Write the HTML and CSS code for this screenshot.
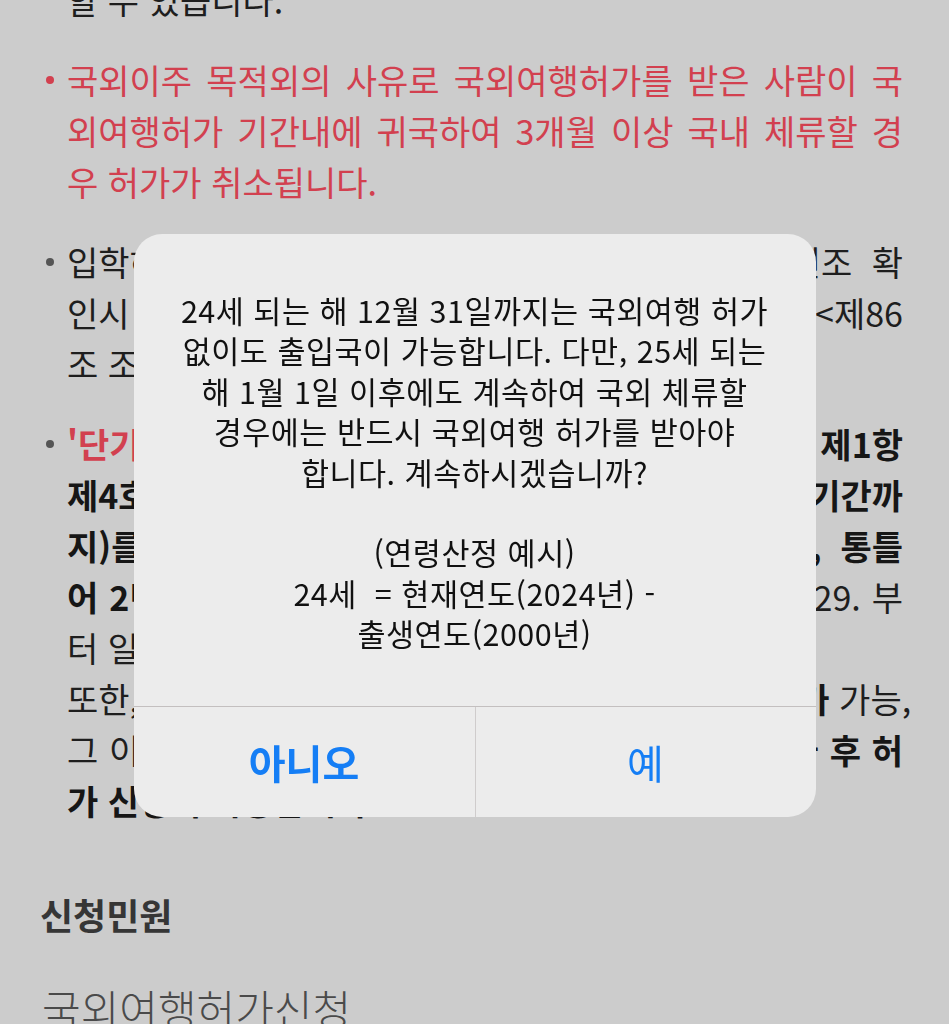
FILE: index.html
```html
<!DOCTYPE html>
<html lang="ko">
<head>
<meta charset="utf-8">
<title>국외여행허가</title>
<link rel="stylesheet" href="styles.css">
</head>
<body>
<main class="page">
  <div class="cont">
    <div class="ln last">할 수 있습니다.</div>
  </div>

  <div class="item">
    <span class="dot red-dot"></span>
    <div class="txt red">
      <div class="ln">국외이주 목적외의 사유로 국외여행허가를 받은 사람이 국</div>
      <div class="ln">외여행허가 기간내에 귀국하여 3개월 이상 국내 체류할 경</div>
      <div class="ln last">우 허가가 취소됩니다.</div>
    </div>
  </div>

  <div class="item">
    <span class="dot"></span>
    <div class="txt">
      <div class="ln">입학허가서 등 제출서류를 허위로 작성하거나 위변조 확</div>
      <div class="ln">인시 국외여행허가 취소 및 처벌될 수 있습니다.&lt;제86</div>
      <div class="ln last">조 조치 및 제94조 처벌&gt;</div>
    </div>
  </div>

  <div class="item">
    <span class="dot"></span>
    <div class="txt">
      <div class="ln"><b class="red">'단기 국외여행'</b><b> 허가기간은 병역법 시행령 제146조 제1항</b></div>
      <div class="ln"><b>제4호에 따라 허가기간(최초 허가일부터 최대 허가기간까</b></div>
      <div class="ln"><b>지)를 부여하며, 기간연장 시에도 최초 허가일부터, 통틀</b></div>
      <div class="ln"><b>어 2년 이내로 허가합니다</b>(예: 2024. 3. 1.~2026. 2. 29. 부</div>
      <div class="ln last">터 일정 기간 체류 가능)</div>
      <div class="ln">또한, 귀국 후 다시 출국하는 경우 <b>1회에 한하여 재허가</b> 가능,</div>
      <div class="ln">그 이후에는 병역의무를 먼저 이행하거나 <b>국내로 귀국 후 허</b></div>
      <div class="ln last"><b>가 신청이 가능합니다.</b></div>
    </div>
  </div>

  <h2 class="heading">신청민원</h2>
  <div class="service">국외여행허가신청</div>
</main>

<div class="overlay">
  <div class="dialog" role="alertdialog">
    <div class="msg">
      24세 되는 해 12월 31일까지는 국외여행 허가<br>
      없이도 출입국이 가능합니다. 다만, 25세 되는<br>
      해 1월 1일 이후에도 계속하여 국외 체류할<br>
      경우에는 반드시 국외여행 허가를 받아야<br>
      합니다. 계속하시겠습니까?<br>
      <br>
      (연령산정 예시)<br>
      24세&nbsp; = 현재연도(2024년) -<br>
      출생연도(2000년)
    </div>
    <div class="actions">
      <button class="btn btn-no" type="button">아니오</button>
      <button class="btn btn-yes" type="button">예</button>
    </div>
  </div>
</div>
</body>
</html>
```

FILE: styles.css
```css
html, body {
  margin: 0;
  padding: 0;
}

body {
  background: #cccccc;
  font-family: "Noto Sans CJK KR", "Noto Sans", sans-serif;
  color: #1e1e1e;
  height: 1024px;
  overflow: hidden;
}

.page {
  padding: 0 46px 0 40px;
}

.cont {
  margin-top: -26px;
  padding-left: 27px;
}

.ln {
  font-size: 34px;
  line-height: 51px;
  white-space: nowrap;
  text-align: justify;
  text-align-last: justify;
}

.ln.last {
  text-align: left;
  text-align-last: left;
}

.ln b {
  font-weight: 700;
  color: #161616;
}

.item {
  display: flex;
  align-items: flex-start;
  margin-top: 29px;
  margin-left: 6px;
}

.dot {
  flex: none;
  width: 8px;
  height: 8px;
  border-radius: 50%;
  background: #555555;
  margin-top: 22px;
  margin-right: 13px;
}

.red-dot {
  background: #d2404f;
}

.txt {
  flex: 1;
  min-width: 0;
}

.red,
.ln b.red {
  color: #d2404f;
}

.heading {
  margin: 68px 0 0 0;
  font-size: 36px;
  line-height: 40px;
  font-weight: 700;
  color: #363636;
}

.service {
  margin: 49px 0 0 2px;
  font-size: 42px;
  line-height: 50px;
  font-weight: 300;
  color: #4a4a4a;
}

/* modal */
.overlay {
  position: fixed;
  inset: 0;
  display: flex;
  justify-content: center;
  align-items: flex-start;
  padding-top: 234px;
}

.dialog {
  width: 682px;
  background: #ececec;
  border-radius: 28px;
  overflow: hidden;
}

.msg {
  padding: 56px 16px 52px;
  text-align: center;
  font-size: 30.5px;
  letter-spacing: 0.5px;
  line-height: 40.4px;
  color: #111111;
}

.actions {
  display: grid;
  grid-template-columns: 1fr 1fr;
  border-top: 1px solid #c3bfbf;
}

.btn {
  height: 110px;
  border: 0;
  margin: 0;
  padding: 0;
  background: transparent;
  font-family: "Noto Sans CJK KR", "Noto Sans", sans-serif;
  font-size: 40px;
  color: #157ef5;
}

.btn-no {
  font-weight: 700;
}

.btn-yes {
  font-weight: 400;
  border-left: 1px solid #cfcccc;
}
```
